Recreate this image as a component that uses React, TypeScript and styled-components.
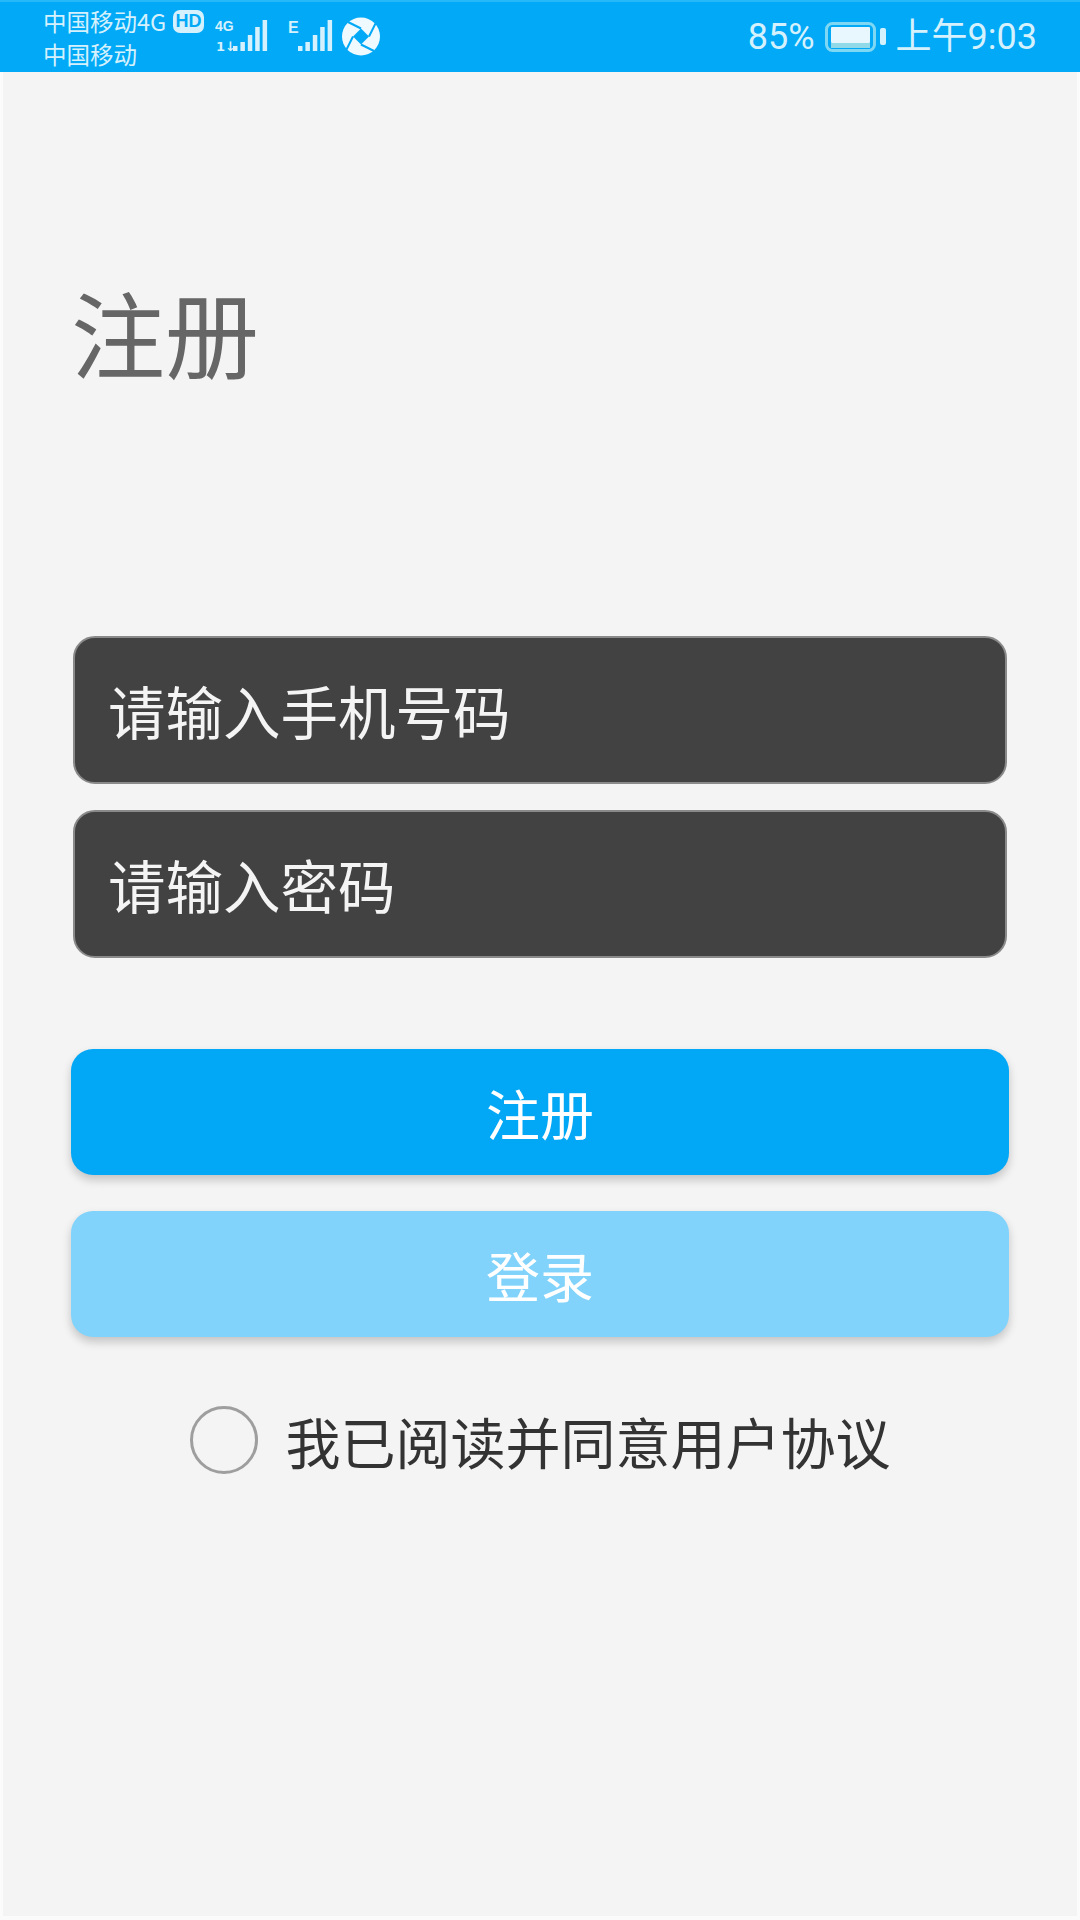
import React from "react"
import styled, { createGlobalStyle } from "styled-components"

const GlobalStyle = createGlobalStyle`
  html, body {
    margin: 0;
    padding: 0;
    background: #f4f4f5;
  }
  * {
    box-sizing: border-box;
  }
`

const Page = styled.div`
  width: 1080px;
  height: 1920px;
  display: flex;
  flex-direction: column;
  background: #f4f4f5;
  font-family: "Noto Sans CJK SC", "Noto Sans", sans-serif;
`

const StatusBar = styled.div`
  height: 72px;
  flex: none;
  display: flex;
  align-items: center;
  justify-content: space-between;
  padding: 0 43px 0 43px;
  background: #02a9f6;
  border-top: 2px solid #25b9fa;
  color: #d5f1fd;
`

const StatusLeft = styled.div`
  position: relative;
  display: flex;
  align-items: center;
`

const Carriers = styled.div`
  width: 172px;
  display: flex;
  flex-direction: column;
  gap: 3px;
  font-size: 23.5px;
  line-height: 30px;
`

const CarrierRow = styled.div`
  display: flex;
  align-items: center;
  white-space: nowrap;
`

const HdBadge = styled.span`
  position: absolute;
  left: 130px;
  top: 4px;
  width: 31px;
  height: 23px;
  border-radius: 7px;
  background: #d5f1fd;
  color: #02a9f6;
  font: 700 18px/23px "Liberation Sans", sans-serif;
  text-align: center;
`

const SignalIcon = styled.svg`
  display: block;
  flex: none;
`

const StatusRight = styled.div`
  display: flex;
  align-items: center;
  font: 400 36px/40px Roboto, "Noto Sans CJK SC", sans-serif;
`

const Battery = styled.svg`
  display: block;
  margin: 0 10px;
`

const Content = styled.div`
  flex: 1;
  padding: 0 70px;
  display: flex;
  flex-direction: column;
  border-left: 3px solid #fbfbfb;
  border-right: 3px solid #fbfbfb;
  border-bottom: 4px solid #fbfbfb;
`

const Title = styled.h1`
  margin: 204px 0 0 -2px;
  font-size: 94px;
  line-height: 110px;
  font-weight: 400;
  color: #666666;
`

const Fields = styled.div`
  margin-top: 250px;
  display: flex;
  flex-direction: column;
  gap: 26px;
`

const Field = styled.div`
  height: 148px;
  padding: 0 33px;
  display: flex;
  align-items: center;
  background: #424242;
  border: 2px solid #8a8a8a;
  border-radius: 22px;
  color: #f4f4f4;
  font-size: 57.5px;
`

const Buttons = styled.div`
  margin: 91px -2px 0;
  display: flex;
  flex-direction: column;
  gap: 36px;
`

const Button = styled.div<{ $light?: boolean }>`
  height: 126px;
  display: flex;
  align-items: center;
  justify-content: center;
  background: ${(p) => (p.$light ? "#81d3fb" : "#02a8f6")};
  border-radius: 22px;
  box-shadow: 0 5px 10px rgba(0, 0, 0, 0.2);
  color: #ffffff;
  font-size: 54px;
`

const Agreement = styled.div`
  margin: 63px 0 0 1px;
  display: flex;
  align-items: center;
  justify-content: center;
  gap: 27px;
  color: #333333;
  font-size: 55px;
`

const Radio = styled.div`
  width: 68px;
  height: 68px;
  flex: none;
  border: 3px solid #9e9e9e;
  border-radius: 50%;
`

const barHeights = [5, 9, 16, 24, 31]

const signalBars = (x: number) =>
  barHeights.map((h, i) => (
    <rect key={i} x={x + i * 7.4} y={37 - h} width={4.5} height={h} fill="#d5f1fd" />
  ))

export default function App() {
  return (
    <Page>
      <GlobalStyle />
      <StatusBar>
        <StatusLeft>
          <Carriers>
            <CarrierRow>
              中国移动4G
              <HdBadge>HD</HdBadge>
            </CarrierRow>
            <CarrierRow>中国移动</CarrierRow>
          </Carriers>
          <SignalIcon width="170" height="46" viewBox="0 0 170 46">
            <text x="0" y="17" fontSize="14" fontWeight="700" fill="#d5f1fd" fontFamily="Liberation Sans">
              4G
            </text>
            <text x="1" y="37" fontSize="13" fontWeight="700" fill="#d5f1fd" fontFamily="DejaVu Sans">
              1↓
            </text>
            {signalBars(18)}
            <text x="73" y="19" fontSize="16" fontWeight="700" fill="#d5f1fd" fontFamily="Liberation Sans">
              E
            </text>
            {signalBars(83)}
            <circle cx="146" cy="22.5" r="19" fill="#eefaff" />
            <path d="M146 14.5l8 8-8 8-8-8z" fill="#02a9f6" />
            <path
              d="M146 14.5L133 8M154 22.5L160.5 9.5M146 30.5L159 37M138 22.5L131.5 35.5"
              stroke="#02a9f6"
              strokeWidth="2"
              fill="none"
            />
          </SignalIcon>
        </StatusLeft>
        <StatusRight>
          85%
          <Battery width="61" height="30" viewBox="0 0 61 30">
            <rect x="1.5" y="1.5" width="48" height="27" rx="6" fill="none" stroke="#7fd8f3" strokeWidth="3" />
            <rect x="6" y="21" width="39" height="5" fill="#8fd9e8" />
            <rect x="6" y="5" width="39" height="16" rx="1" fill="#e8f7fe" />
            <rect x="55" y="6" width="6" height="17" rx="2" fill="#d5f1fd" />
          </Battery>
          上午9:03
        </StatusRight>
      </StatusBar>
      <Content>
        <Title>注册</Title>
        <Fields>
          <Field>请输入手机号码</Field>
          <Field>请输入密码</Field>
        </Fields>
        <Buttons>
          <Button>注册</Button>
          <Button $light>登录</Button>
        </Buttons>
        <Agreement>
          <Radio />
          我已阅读并同意用户协议
        </Agreement>
      </Content>
    </Page>
  )
}
